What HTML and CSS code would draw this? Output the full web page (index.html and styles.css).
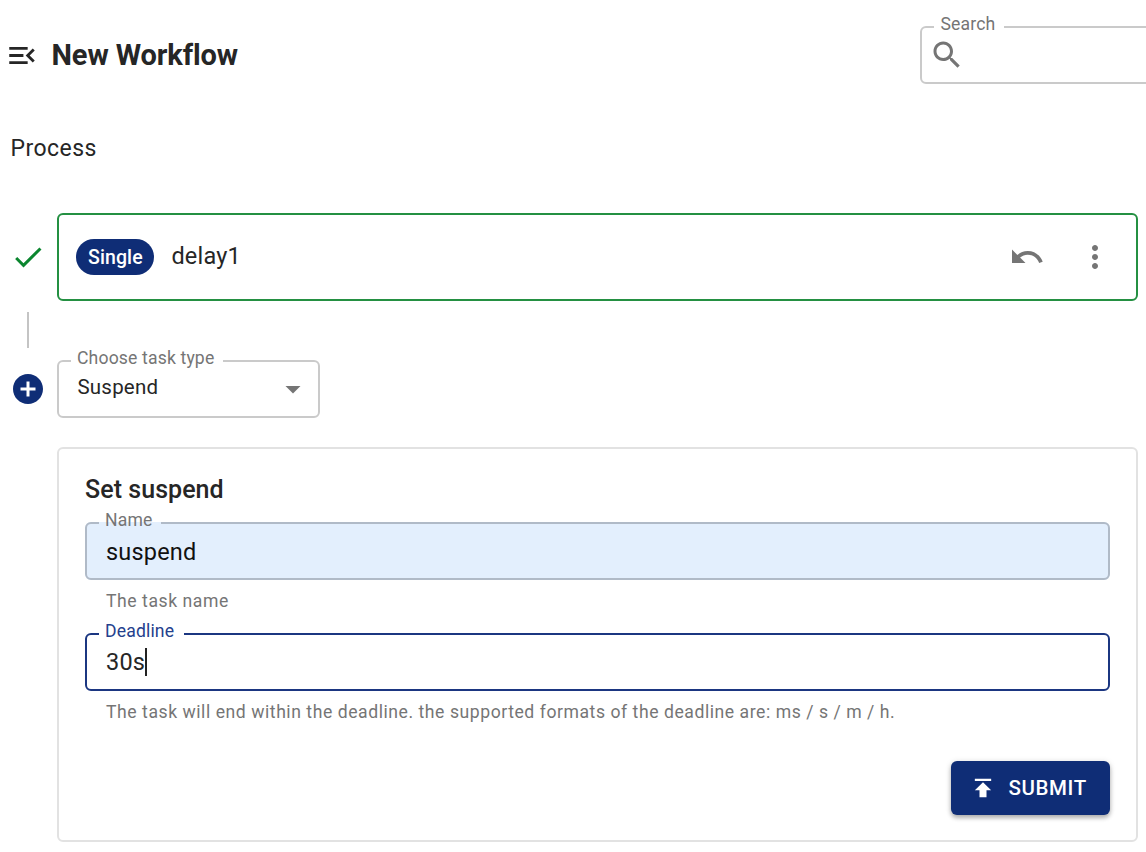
FILE: index.html
```html
<!DOCTYPE html>
<html lang="en">
<head>
<meta charset="utf-8">
<title>New Workflow</title>
<link rel="stylesheet" href="styles.css">
</head>
<body>
<header class="topbar">
  <svg class="icon menu-icon" viewBox="0 0 24 24"><path d="M3 18h13v-2H3v2zM3 13h10v-2H3v2zM3 6v2h13V6H3zM21 15.59 17.42 12 21 8.41 19.59 7l-5 5 5 5z"/></svg>
  <h1 class="title"><span>New Workflow</span></h1>
  <div class="field search">
    <label class="label"><span>Search</span></label>
    <svg class="icon search-icon" viewBox="0 0 24 24"><path d="M15.5 14h-.79l-.28-.27C15.41 12.59 16 11.11 16 9.5 16 5.91 13.09 3 9.5 3S3 5.91 3 9.5 5.91 16 9.5 16c1.61 0 3.09-.59 4.23-1.57l.27.28v.79l5 4.99L20.49 19l-4.99-5zm-6 0C7.01 14 5 11.99 5 9.5S7.01 5 9.5 5 14 7.01 14 9.5 11.99 14 9.5 14z"/></svg>
    <fieldset class="outline"><legend class="notch"></legend></fieldset>
  </div>
</header>
<main class="content">
  <h2 class="section"><span>Process</span></h2>
  <div class="step">
    <div class="rail"><svg class="icon check-icon" viewBox="0 0 24 24"><path d="M9 16.17 4.83 12l-1.42 1.41L9 19 21 7l-1.41-1.41z"/></svg></div>
    <div class="task">
      <span class="chip"><span>Single</span></span>
      <span class="task-name">delay1</span>
      <svg class="icon undo-icon" viewBox="0 0 24 24"><path d="M12.5 8c-2.65 0-5.05.99-6.9 2.6L2 7v9h9l-3.62-3.62c1.39-1.16 3.16-1.88 5.12-1.88 3.54 0 6.55 2.31 7.6 5.5l2.37-.78C21.08 11.03 17.15 8 12.5 8z"/></svg>
      <svg class="icon more-icon" viewBox="0 0 24 24"><path d="M12 8c1.1 0 2-.9 2-2s-.9-2-2-2-2 .9-2 2 .9 2 2 2zm0 2c-1.1 0-2 .9-2 2s.9 2 2 2 2-.9 2-2-.9-2-2-2zm0 6c-1.1 0-2 .9-2 2s.9 2 2 2 2-.9 2-2-.9-2-2-2z"/></svg>
    </div>
  </div>
  <div class="connector"></div>
  <div class="step">
    <div class="rail"><svg class="icon add-icon" viewBox="0 0 24 24"><path d="M12 2C6.48 2 2 6.48 2 12s4.480 10 10 10 10-4.480 10-10S17.520 2 12 2zm5 11h-4v4h-2v-4H7v-2h4V7h2v4h4v2z"/></svg></div>
    <div class="field select">
      <label class="label"><span>Choose task type</span></label>
      <span class="select-value">Suspend</span>
      <svg class="icon arrow-icon" viewBox="0 0 24 24"><path d="m7 10 5 5 5-5z"/></svg>
      <fieldset class="outline"><legend class="notch"></legend></fieldset>
    </div>
  </div>
  <section class="card">
    <h3 class="card-title"><span>Set suspend</span></h3>
    <div class="field name">
      <label class="label"><span>Name</span></label>
      <span class="value">suspend</span>
      <fieldset class="outline"><legend class="notch"></legend></fieldset>
    </div>
    <p class="helper"><span>The task name</span></p>
    <div class="field deadline">
      <label class="label"><span>Deadline</span></label>
      <span class="value">30s</span><i class="caret"></i>
      <fieldset class="outline"><legend class="notch"></legend></fieldset>
    </div>
    <p class="helper"><span>The task will end within the deadline. the supported formats of the deadline are: ms / s / m / h.</span></p>
    <button class="submit">
      <svg class="icon submit-icon" viewBox="0 0 24 24"><path d="M5 4v2h14V4H5zm0 10h4v6h6v-6h4l-7-7-7 7z"/></svg>
      <span>SUBMIT</span>
    </button>
  </section>
</main>
</body>
</html>
```
FILE: styles.css
```css
* { box-sizing: border-box; margin: 0; padding: 0; }
body { width: 1146px; height: 852px; overflow: hidden; background: #fff; color: #262626; font-family: Roboto, sans-serif; }
.icon { display: block; flex: none; width: 36px; height: 36px; fill: currentColor; }
.topbar { display: flex; align-items: flex-start; height: 110px; padding-top: 26px; }
.menu-icon { width: 34px; height: 35px; margin: 12px 0 0 4.500px; }
.title { flex: 1; margin: 11px 0 0 13px; font-size: 29px; line-height: 36px; font-weight: 700; letter-spacing: -.1px; }

.field { position: relative; display: flex; align-items: center; height: 58px; }
.label { position: absolute; left: 20px; top: -14px; z-index: 1; font-size: 17.600px; line-height: 24px; letter-spacing: .15px; color: #757575; white-space: nowrap; }
.outline { position: absolute; inset: 0; height: 58px; border: 2px solid #cacaca; border-radius: 6px; padding-left: 12px; min-width: 0; pointer-events: none; }
.notch { height: 2px; width: 70px; }
.search { width: 240px; flex: none; margin-right: -14px; }
.search .label { left: 20.500px; }
.search-icon { margin-left: 9px; width: 36px; height: 36px; color: #757575; }

.section { margin-left: 10.500px; padding-top: 23px; height: 103px; font-size: 23px; line-height: 32px; font-weight: 400; letter-spacing: .45px; }
.step { display: flex; align-items: center; }
.rail { width: 57px; flex: none; display: flex; justify-content: flex-start; padding-left: 9.500px; }
.check-icon { color: #0b862f; }
.task { display: flex; align-items: center; width: 1081px; height: 88px; border: 2px solid #249042; border-radius: 6px; padding: 0 23.500px 0 17.400px; }
.chip { height: 36px; width: 78px; border-radius: 18px; background: #0f2d76; color: #fff; display: flex; align-items: center; justify-content: center; font-size: 19.500px; font-weight: 500; letter-spacing: .1px; }
.task-name { flex: 1; margin: -2px 0 0 17px; font-size: 23.500px; letter-spacing: .2px; }
.undo-icon { color: #757575; margin-right: 31.500px; }
.more-icon { color: #757575; }
.connector { width: 2px; height: 36px; margin: 11px 0 12px 27px; background: #c4c4c4; }
.add-icon { color: #0f2d76; }
.select { width: 263px; height: 58px; }
.select .notch { width: 152px; }
.select-value { flex: 1; margin: -4px 0 0 20.500px; font-size: 20.500px; letter-spacing: .2px; }
.arrow-icon { margin-right: 9px; color: #757575; }

.card { width: 1081px; height: 395px; margin: 29px 0 0 57px; border: 2px solid #e2e2e2; border-radius: 6px; padding: 23px 26px 24px 26px; display: flex; flex-direction: column; }
.card-title { height: 50px; font-size: 25px; line-height: 35px; font-weight: 500; letter-spacing: .05px; }
.name { background: #e3effd; border-radius: 6px; }
.name .outline { border-color: #b0bac7; }
.name .notch { width: 62px; }
.value { margin-left: 21px; font-size: 23.500px; letter-spacing: .2px; }
.name .value { color: #111; padding-top: 1px; }
.deadline .outline { border-color: #1b3681; }
.deadline .label { color: #24408d; }
.deadline .notch { width: 85px; }
.caret { width: 2px; height: 28px; background: #222; }
.helper { height: 53px; padding: 9px 0 0 21px; font-size: 17.600px; line-height: 24px; letter-spacing: .55px; color: #757575; white-space: nowrap; }
.submit { align-self: flex-end; flex: none; display: flex; align-items: center; width: 159.500px; height: 54px; margin-top: 17px; padding-left: 18px; border: 0; border-radius: 6px; background: #0f2d76; color: #fff; font: 500 20.500px Roboto, sans-serif; letter-spacing: .6px; box-shadow: 0 3px 4px rgba(0,0,0,.25), 0 1px 6px rgba(0,0,0,.14); }
.submit-icon { width: 28px; height: 28px; margin-right: 12px; }
```
